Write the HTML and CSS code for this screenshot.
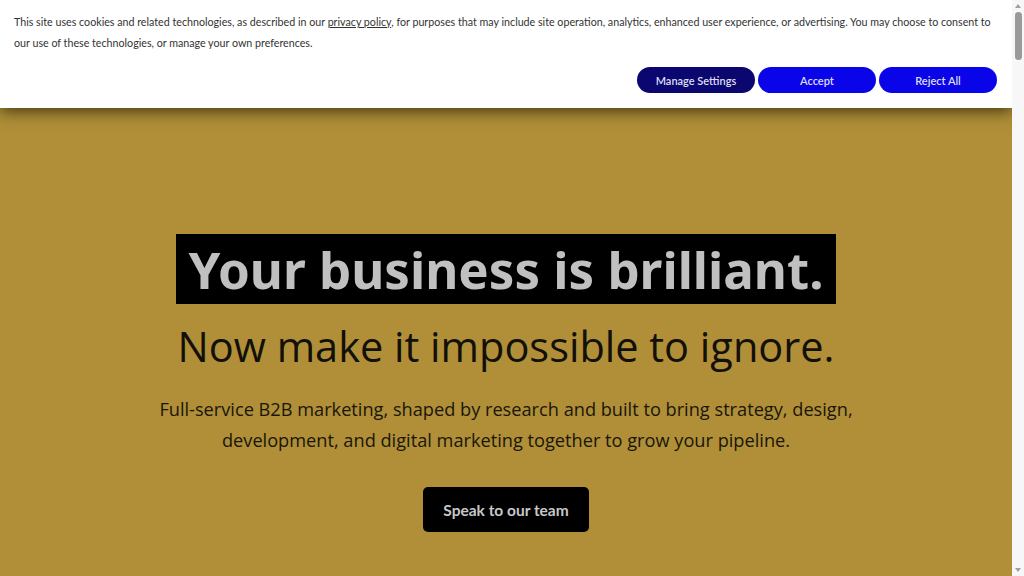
FILE: index.html
```html
<!DOCTYPE html>
<html lang="en">
<head>
<meta charset="utf-8">
<title>B2B Marketing</title>
<link rel="stylesheet" href="styles.css">
</head>
<body>
<div class="page">
  <div class="viewport">
    <div class="cookie">
      <p class="cookie-text">This site uses cookies and related technologies, as described in our <a href="#">privacy policy</a>, for purposes that may include site operation, analytics, enhanced user experience, or advertising. You may choose to consent to<br>our use of these technologies, or manage your own preferences.</p>
      <div class="cookie-actions">
        <button class="btn-pill btn-dark">Manage Settings</button>
        <button class="btn-pill btn-blue">Accept</button>
        <button class="btn-pill btn-blue">Reject All</button>
      </div>
    </div>
    <main class="hero">
      <h1 class="hero-title"><span>Your business is brilliant.</span></h1>
      <h2 class="hero-sub">Now make it impossible to ignore.</h2>
      <p class="hero-text">Full-service B2B marketing, shaped by research and built to bring strategy, design,<br>development, and digital marketing together to grow your pipeline.</p>
      <a class="hero-cta" href="#">Speak to our team</a>
    </main>
  </div>
  <div class="scrollbar">
    <div class="arrow-up"></div>
    <div class="thumb"></div>
    <div class="track"></div>
    <div class="arrow-down"></div>
  </div>
</div>
</body>
</html>
```
FILE: styles.css
```css
* { box-sizing: border-box; }
html, body { margin: 0; padding: 0; height: 100%; overflow: hidden; }
body { background: #b08f38; }
.page { display: flex; width: 1024px; height: 576px; }
.viewport { flex: 1; min-width: 0; display: flex; flex-direction: column; background: #b08f38; position: relative; }
.cookie {
  background: #ffffff;
  height: 108px;
  padding: 11px 14px 0 14px;
  box-shadow: 0 4px 14px rgba(40, 35, 10, 0.75);
  position: relative;
  z-index: 2;
}
.cookie-text {
  margin: 0;
  font-family: "Lato", "Open Sans", sans-serif;
  font-size: 10.7px;
  line-height: 21px;
  color: #333333;
  white-space: nowrap;
}
.cookie-text a { color: #333333; text-decoration: underline; }
.cookie-actions {
  display: flex;
  justify-content: flex-end;
  gap: 3px;
  margin-top: 14px;
  padding-right: 1px;
}
.btn-pill {
  width: 118px;
  height: 26px;
  border: none;
  border-radius: 13px;
  font-family: "Lato", "Open Sans", sans-serif;
  font-size: 11px;
  font-weight: 600;
  color: #dedef2;
  padding: 0;
}
.btn-dark { background: #0b0770; }
.btn-blue { background: #0a05e8; }
.hero {
  flex: 1;
  display: flex;
  flex-direction: column;
  align-items: center;
  padding-top: 126px;
  text-align: center;
}
.hero-title {
  margin: 0;
  font-family: "Noto Sans", sans-serif;
  font-weight: 700;
  font-size: 51px;
  line-height: 70px;
}
.hero-title span {
  display: inline-block;
  background: #000000;
  color: #c0c0c0;
  padding: 0 13px;
}
.hero-sub {
  margin: 14px 0 0 0;
  font-family: "Open Sans", sans-serif;
  font-weight: 400;
  font-size: 41.5px;
  line-height: 56px;
  color: #121008;
}
.hero-text {
  margin: 20px 0 0 0;
  font-family: "Open Sans", sans-serif;
  font-size: 18.2px;
  line-height: 31px;
  color: #1a1608;
}
.hero-cta {
  margin-top: 31px;
  display: inline-flex;
  align-items: center;
  justify-content: center;
  width: 166px;
  height: 45px;
  background: #000000;
  border-radius: 5px;
  color: #c8c8c8;
  font-family: "Lato", sans-serif;
  font-weight: 700;
  font-size: 15.5px;
  text-decoration: none;
}
.scrollbar {
  width: 12px;
  background: #f7f7f7;
  display: flex;
  flex-direction: column;
  align-items: center;
  position: relative;
  z-index: 3;
}
.arrow-up {
  margin-top: 4px;
  width: 0; height: 0;
  border-left: 3px solid transparent;
  border-right: 3px solid transparent;
  border-bottom: 4px solid #a0a0a0;
}
.thumb {
  margin-top: 4px;
  width: 7px;
  height: 48px;
  border-radius: 4px;
  background: #9a9a9a;
}
.track { flex: 1; }
.arrow-down {
  margin-bottom: 4px;
  width: 0; height: 0;
  border-left: 3px solid transparent;
  border-right: 3px solid transparent;
  border-top: 4px solid #a0a0a0;
}
```
